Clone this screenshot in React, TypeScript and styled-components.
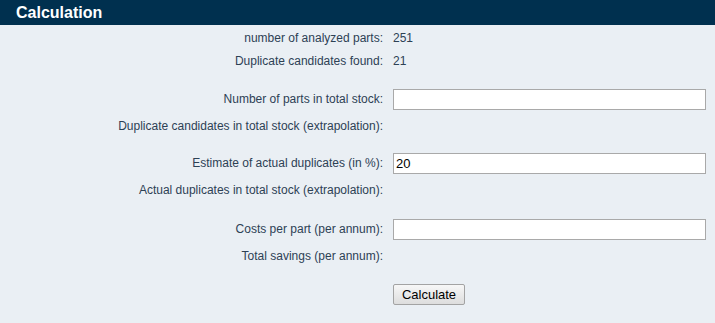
import { Fragment } from "react";
import styled, { createGlobalStyle } from "styled-components";

const GlobalStyle = createGlobalStyle`
  html, body {
    margin: 0;
    padding: 0;
    background: #eaeff4;
    font-family: "Liberation Sans", Arial, sans-serif;
  }
`;

const Panel = styled.div`
  width: 715px;
  min-height: 323px;
  background: #eaeff4;
  color: #2d4154;
  font-size: 12px;
`;

const Header = styled.div`
  height: 25px;
  background: #00304f;
  color: #ffffff;
  font-size: 16px;
  font-weight: bold;
  display: flex;
  align-items: center;
  padding-left: 16px;
`;

const Form = styled.div`
  display: grid;
  grid-template-columns: 383px 313px;
  column-gap: 10px;
  padding-top: 2px;
`;

const Label = styled.div<{ $top?: number }>`
  text-align: right;
  height: 23px;
  line-height: 23px;
  margin-top: ${(p) => p.$top ?? 0}px;
  white-space: nowrap;
`;

const Value = styled.div<{ $top?: number }>`
  height: 23px;
  line-height: 23px;
  margin-top: ${(p) => p.$top ?? 0}px;
`;

const FieldLabel = styled(Label)`
  height: 21px;
  line-height: 21px;
`;

const Input = styled.input<{ $top?: number }>`
  box-sizing: border-box;
  width: 313px;
  height: 21px;
  margin: ${(p) => p.$top ?? 0}px 0 0 0;
  border: 1px solid #a9a9a9;
  background: #ffffff;
  padding: 1px 2px;
  font-family: "Liberation Sans", Arial, sans-serif;
  font-size: 13px;
  color: #000000;
  outline: none;
`;

const Button = styled.button`
  box-sizing: border-box;
  width: 72px;
  height: 21px;
  margin-top: 16px;
  border: 1px solid #a3a3a3;
  border-radius: 2px;
  background: linear-gradient(#f7f7f7, #dddddd);
  font-family: "Liberation Sans", Arial, sans-serif;
  font-size: 13px;
  color: #000000;
  padding: 0;
  cursor: pointer;
`;

const groups = [
  { field: "Number of parts in total stock:", value: "", result: "Duplicate candidates in total stock (extrapolation):", top: 16 },
  { field: "Estimate of actual duplicates (in %):", value: "20", result: "Actual duplicates in total stock (extrapolation):", top: 15 },
  { field: "Costs per part (per annum):", value: "", result: "Total savings (per annum):", top: 17 },
];

export default function App() {
  return (
    <Panel>
      <GlobalStyle />
      <Header>Calculation</Header>
      <Form>
        <Label>number of analyzed parts:</Label>
        <Value>251</Value>
        <Label>Duplicate candidates found:</Label>
        <Value>21</Value>

        {groups.map((g) => (
          <Fragment key={g.field}>
            <FieldLabel $top={g.top}>{g.field}</FieldLabel>
            <Input $top={g.top} defaultValue={g.value} />
            <Label $top={5}>{g.result}</Label>
            <Value $top={5}></Value>
          </Fragment>
        ))}

        <div />
        <div>
          <Button>Calculate</Button>
        </div>
      </Form>
    </Panel>
  );
}
